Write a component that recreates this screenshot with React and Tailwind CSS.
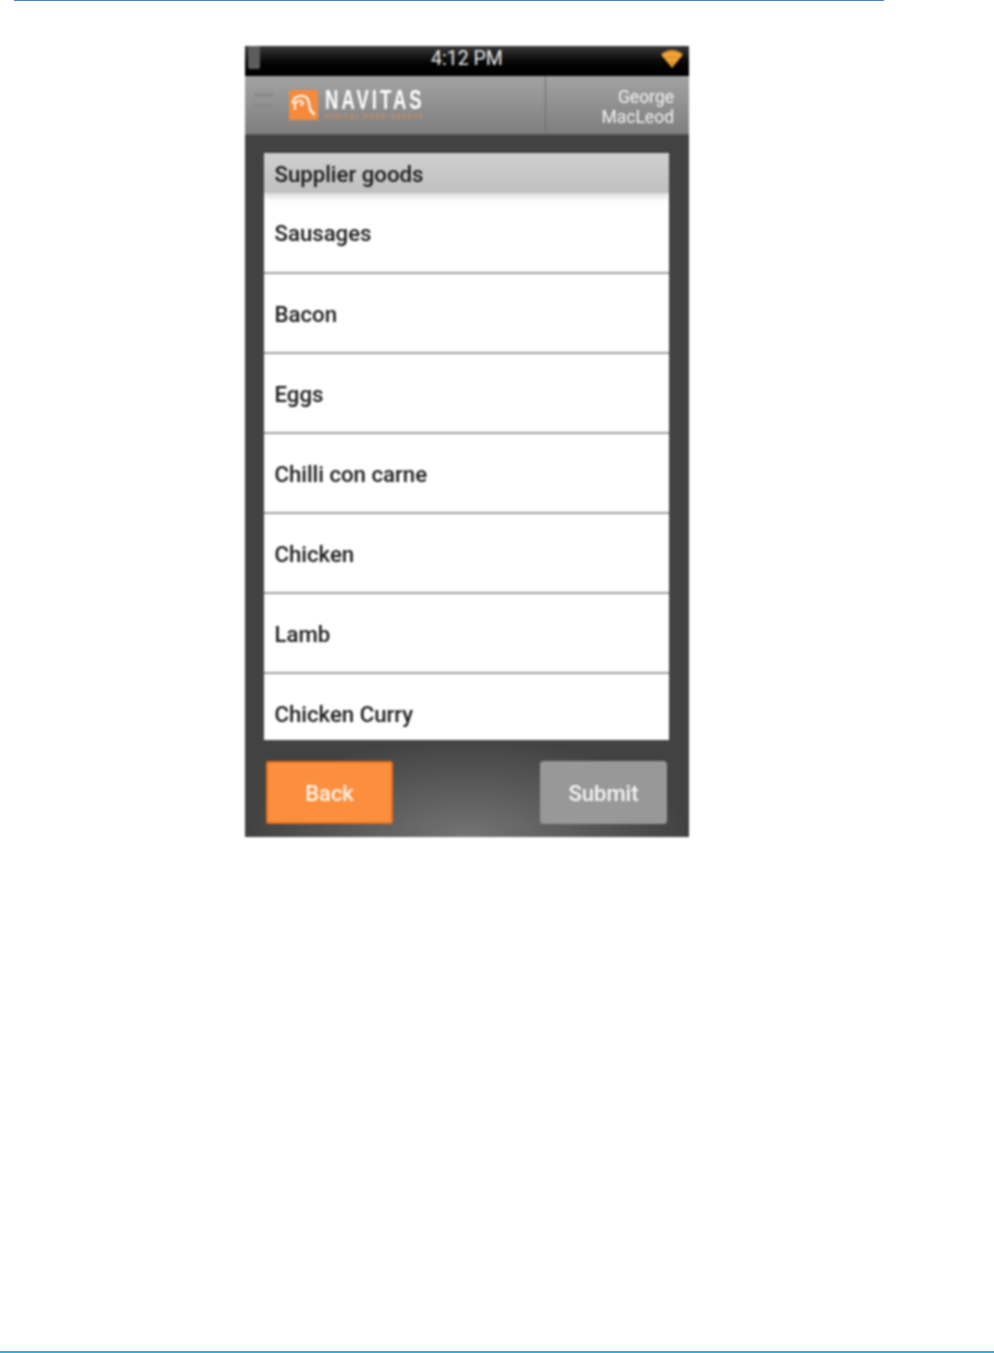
const rows = [
  { name: "Sausages", h: "h-[81px]" },
  { name: "Bacon", h: "h-[80px]" },
  { name: "Eggs", h: "h-[80px]" },
  { name: "Chilli con carne", h: "h-[80px]" },
  { name: "Chicken", h: "h-[80px]" },
  { name: "Lamb", h: "h-[80px]" },
];

function Wifi() {
  return (
    <svg width="26" height="24" viewBox="0 0 26 24" className="absolute right-[4px] top-[1px]">
      <path d="M2 7.500 C8 1.500 18 1.500 24 7.500 L13 21 Z" fill="#e8952a" />
      <path d="M4 10 C9 6 17 6 22 10" fill="none" stroke="#f7b648" strokeWidth="1.400" />
      <path d="M7.500 14 C10.500 11.500 15.500 11.500 18.500 14" fill="none" stroke="#f7b648" strokeWidth="1.400" />
    </svg>
  );
}

function LogoMark() {
  return (
    <div className="w-[29px] h-[30px] bg-[#f58a3c] shrink-0">
      <svg width="29" height="30" viewBox="0 0 29 30">
        <path
          d="M4 13 C4 8 8 6 13 6 C18 6 19.500 9 20 13 C20.500 18 21 21 25 24"
          fill="none"
          stroke="#fff"
          strokeWidth="2.200"
          strokeLinecap="round"
        />
        <path d="M6 19 L6 14 C7 11 11 10 13 11.500 C15 13 14 15 12 15" fill="none" stroke="#fff" strokeWidth="1.800" strokeLinecap="round" />
      </svg>
    </div>
  );
}

export default function App() {
  return (
    <div className="h-[1353px] bg-white flex flex-col font-['Roboto',sans-serif] overflow-hidden">
      <div className="ml-[14px] w-[870px] h-px bg-[#4a86c5] shrink-0" />
      <div className="ml-[245px] mt-[45px] w-[444px] h-[791px] flex flex-col shrink-0 blur-[0.8px] bg-[radial-gradient(ellipse_220px_100px_at_50%_100%,#747474,#424242)]">
        <div className="h-[30px] shrink-0 relative flex items-center justify-center bg-gradient-to-b from-[#3a3a3a] via-[#0a0a0a] to-black">
          <div className="absolute left-[3px] top-0 w-[12px] h-[23px] rounded-[2px] bg-[#5c5c5c]" />
          <span className="text-[#e8e8e8] text-[19.5px] leading-none -mt-[4px]">4:12 PM</span>
          <Wifi />
        </div>
        <div className="h-[59px] shrink-0 flex bg-gradient-to-b from-[#a3a3a3] to-[#7e7e7e] border-b border-[#5e5e5e]">
          <div className="flex-1 flex items-center pl-[9px]">
            <div className="flex flex-col gap-[7px] w-[19px] mr-[16px] -mt-[10px]">
              <div className="h-[4px] bg-[#8a8a8a]" />
              <div className="h-[4px] bg-[#8a8a8a]" />
            </div>
            <LogoMark />
            <div className="ml-[7px] flex flex-col -mt-[2px]">
              <span className="text-white text-[28px] leading-[26px] tracking-[4.6px] font-bold font-['Liberation_Sans',sans-serif] scale-x-[0.66] origin-left w-[100px] whitespace-nowrap">NAVITAS</span>
              <span className="text-[#d08a58] text-[7px] leading-[8px] tracking-[1.4px] font-bold whitespace-nowrap">DIGITAL FOOD SAFETY</span>
            </div>
          </div>
          <div className="w-[144px] border-l border-[#6e6e6e] flex flex-col items-end justify-center pr-[15px] text-[#f2f2f2] text-[17.5px] leading-[20px] pt-[4px]">
            <span>George</span>
            <span>MacLeod</span>
          </div>
        </div>
        <div className="flex-1 flex flex-col">
          <div className="ml-[19px] mt-[18px] w-[405px] h-[587px] shrink-0 bg-white overflow-hidden flex flex-col">
            <div className="h-[40px] shrink-0 flex items-center pl-[10.500px] text-[22.2px] font-medium text-[#1a1a1a] bg-gradient-to-b from-[#d0d0d0] to-[#c0c0c0] shadow-[0_4px_6px_rgba(190,190,190,0.6)]">
              <span className="mt-[4px]">Supplier goods</span>
            </div>
            {rows.map((r) => (
              <div key={r.name} className={`${r.h} shrink-0 flex items-center pl-[10.500px] text-[22.2px] font-medium text-[#1a1a1a] border-b-2 border-[#a0a0a0]`}>
                <span className="mt-[3px]">{r.name}</span>
              </div>
            ))}
            <div className="h-[66px] shrink-0 flex items-start pl-[10.500px] pt-[25px] text-[22.2px] font-medium leading-[30px] text-[#1a1a1a]">
              Chicken Curry
            </div>
          </div>
          <div className="flex justify-between pl-[21px] pr-[22px] mt-[21px]">
            <div className="w-[127px] h-[63px] rounded-[3px] bg-[#fb8f3e] border-2 border-[#e86e1c] flex items-center justify-center text-[#fff3e8] font-medium text-[22px]"><span className="mt-[2px]">Back</span></div>
            <div className="w-[127px] h-[63px] rounded-[4px] bg-[#989898] flex items-center justify-center text-[#f6f6f6] font-medium text-[22px]"><span className="mt-[2px]">Submit</span></div>
          </div>
        </div>
      </div>
      <div className="mt-auto h-[2px] bg-[#29b2e8] shrink-0" />
    </div>
  );
}
